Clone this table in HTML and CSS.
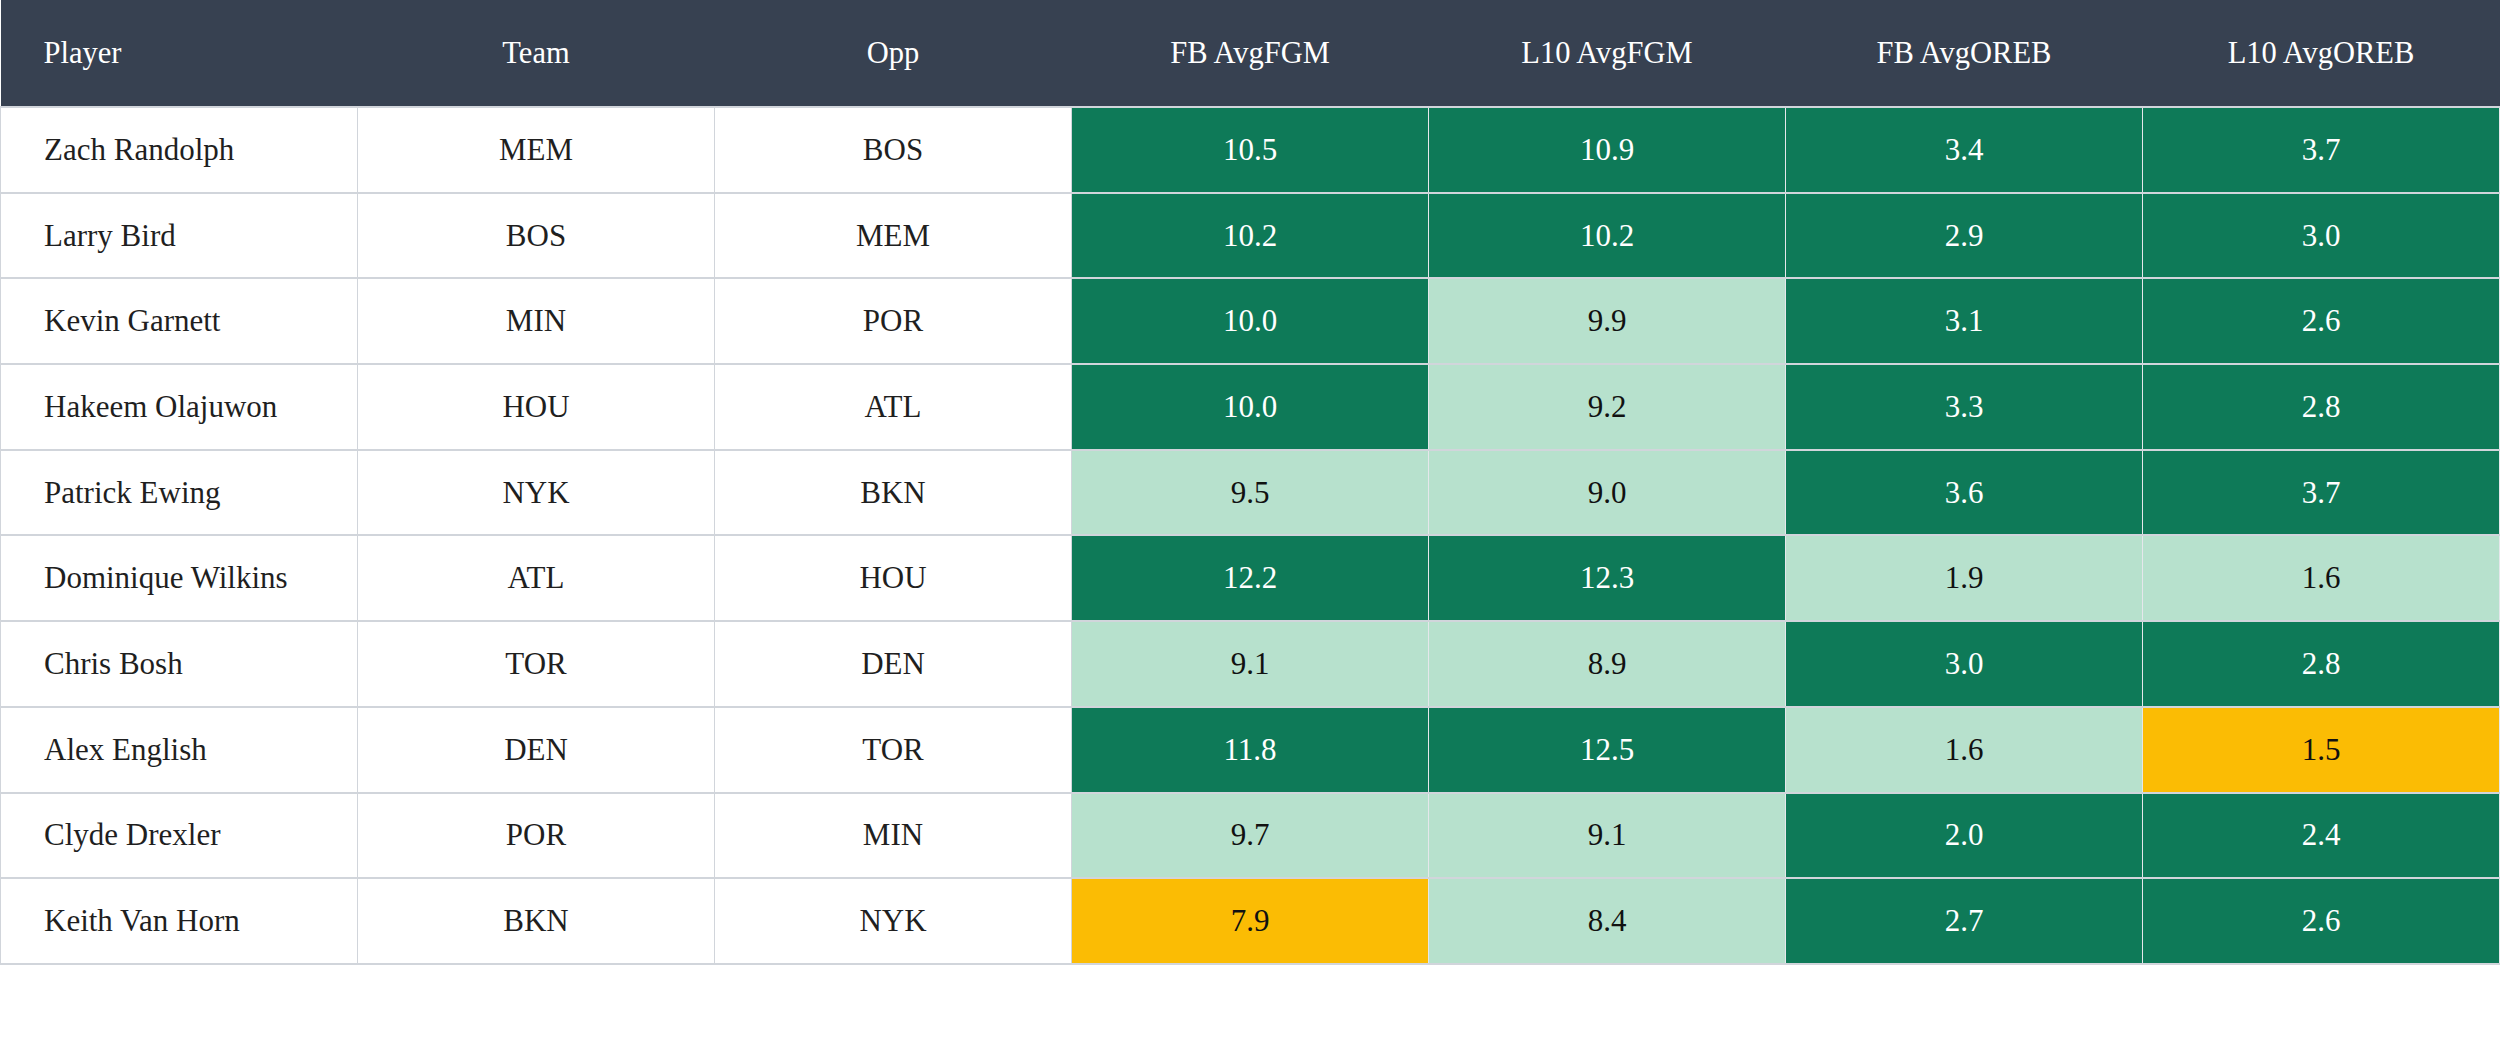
FILE: index.html
```html
<!DOCTYPE html>
<html>
<head>
<meta charset="utf-8">
<link rel="stylesheet" href="styles.css">
</head>
<body>
<table class="stats">
  <thead>
    <tr>
      <th class="name">Player</th>
      <th>Team</th>
      <th>Opp</th>
      <th>FB AvgFGM</th>
      <th>L10 AvgFGM</th>
      <th>FB AvgOREB</th>
      <th>L10 AvgOREB</th>
    </tr>
  </thead>
  <tbody>
    <tr><td class="name">Zach Randolph</td><td>MEM</td><td>BOS</td><td class="hi">10.5</td><td class="hi">10.9</td><td class="hi">3.4</td><td class="hi">3.7</td></tr>
    <tr><td class="name">Larry Bird</td><td>BOS</td><td>MEM</td><td class="hi">10.2</td><td class="hi">10.2</td><td class="hi">2.9</td><td class="hi">3.0</td></tr>
    <tr><td class="name">Kevin Garnett</td><td>MIN</td><td>POR</td><td class="hi">10.0</td><td class="mid">9.9</td><td class="hi">3.1</td><td class="hi">2.6</td></tr>
    <tr><td class="name">Hakeem Olajuwon</td><td>HOU</td><td>ATL</td><td class="hi">10.0</td><td class="mid">9.2</td><td class="hi">3.3</td><td class="hi">2.8</td></tr>
    <tr><td class="name">Patrick Ewing</td><td>NYK</td><td>BKN</td><td class="mid">9.5</td><td class="mid">9.0</td><td class="hi">3.6</td><td class="hi">3.7</td></tr>
    <tr><td class="name">Dominique Wilkins</td><td>ATL</td><td>HOU</td><td class="hi">12.2</td><td class="hi">12.3</td><td class="mid">1.9</td><td class="mid">1.6</td></tr>
    <tr><td class="name">Chris Bosh</td><td>TOR</td><td>DEN</td><td class="mid">9.1</td><td class="mid">8.9</td><td class="hi">3.0</td><td class="hi">2.8</td></tr>
    <tr><td class="name">Alex English</td><td>DEN</td><td>TOR</td><td class="hi">11.8</td><td class="hi">12.5</td><td class="mid">1.6</td><td class="lo">1.5</td></tr>
    <tr><td class="name">Clyde Drexler</td><td>POR</td><td>MIN</td><td class="mid">9.7</td><td class="mid">9.1</td><td class="hi">2.0</td><td class="hi">2.4</td></tr>
    <tr><td class="name">Keith Van Horn</td><td>BKN</td><td>NYK</td><td class="lo">7.9</td><td class="mid">8.4</td><td class="hi">2.7</td><td class="hi">2.6</td></tr>
  </tbody>
</table>
</body>
</html>
```

FILE: styles.css
```css
html, body {
  margin: 0;
  padding: 0;
  background: #ffffff;
}

body {
  font-family: "Liberation Serif", "Times New Roman", serif;
  font-size: 31px;
  color: #1f1f1f;
}

.stats {
  width: 2500px;
  border-collapse: collapse;
  table-layout: fixed;
}

.stats th {
  background: #374151;
  color: #ffffff;
  font-weight: normal;
  font-size: 30.5px;
  height: 106px;
  padding: 0 8px;
  text-align: center;
  border-bottom: 2px solid #d1d5db;
}

.stats td {
  height: 83.7px;
  padding: 0 8px;
  text-align: center;
  border-right: 1px solid #d1d5db;
  border-left: 1px solid #d1d5db;
  border-bottom: 2px solid #d1d5db;
}

.stats .name {
  text-align: left;
  padding-left: 43px;
}

.stats td.hi {
  background: #0e7a58;
  color: #ffffff;
  border-left-color: #e5e7eb;
  border-right-color: #e5e7eb;
}

.stats td.mid {
  background: #b7e1cd;
  color: #111111;
  border-left-color: #e5e7eb;
  border-right-color: #e5e7eb;
}

.stats td.lo {
  background: #fbbc04;
  color: #111111;
  border-left-color: #e5e7eb;
  border-right-color: #e5e7eb;
}
```
